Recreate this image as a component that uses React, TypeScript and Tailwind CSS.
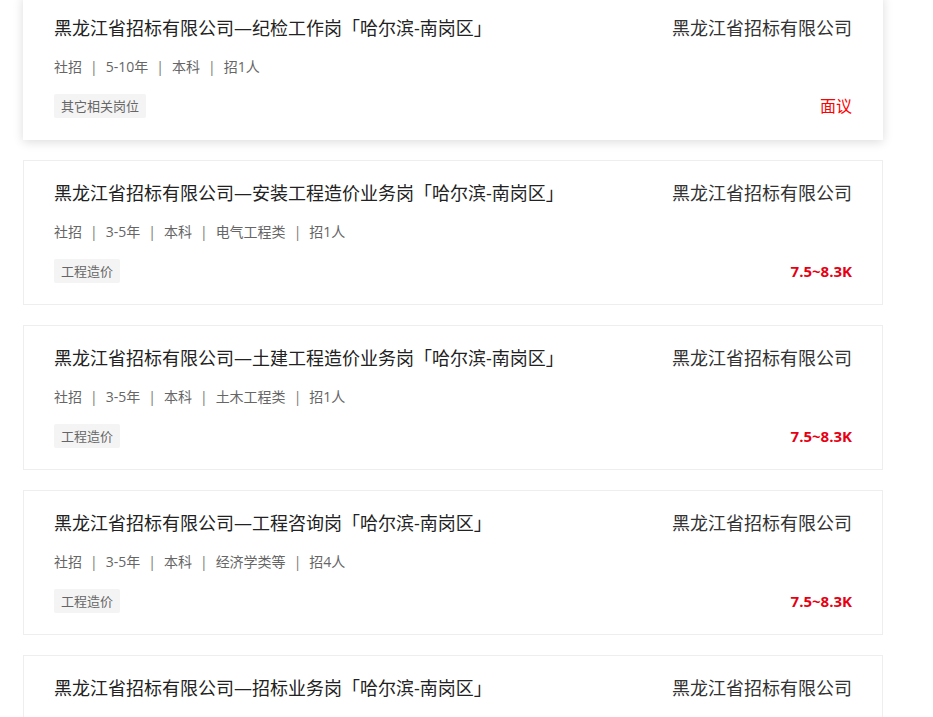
const jobs = [
  {
    title: "黑龙江省招标有限公司—纪检工作岗「哈尔滨-南岗区」",
    meta: ["社招", "5-10年", "本科", "招1人"],
    tag: "其它相关岗位",
    salary: "面议",
  },
  {
    title: "黑龙江省招标有限公司—安装工程造价业务岗「哈尔滨-南岗区」",
    meta: ["社招", "3-5年", "本科", "电气工程类", "招1人"],
    tag: "工程造价",
    salary: "7.5~8.3K",
  },
  {
    title: "黑龙江省招标有限公司—土建工程造价业务岗「哈尔滨-南岗区」",
    meta: ["社招", "3-5年", "本科", "土木工程类", "招1人"],
    tag: "工程造价",
    salary: "7.5~8.3K",
  },
  {
    title: "黑龙江省招标有限公司—工程咨询岗「哈尔滨-南岗区」",
    meta: ["社招", "3-5年", "本科", "经济学类等", "招4人"],
    tag: "工程造价",
    salary: "7.5~8.3K",
  },
  {
    title: "黑龙江省招标有限公司—招标业务岗「哈尔滨-南岗区」",
    meta: ["社招", "3-5年", "本科", "招1人"],
    tag: "招标代理",
    salary: "7.5~8.3K",
  },
];

function JobCard({ job, hovered }: { job: (typeof jobs)[number]; hovered: boolean }) {
  const negotiable = job.salary === "面议";
  return (
    <div
      className={`w-[860px] shrink-0 bg-white border border-[#eeeeee] px-[30px] pt-[19px] pb-[21px] ${
        hovered ? "shadow-[0_2px_10px_rgba(0,0,0,0.14)] border-transparent" : ""
      }`}
    >
      <div className="flex items-center justify-between h-[26px]">
        <div className="text-[18px] leading-[26px] text-[#222]">{job.title}</div>
        <div className="text-[18px] leading-[26px] text-[#333]">黑龙江省招标有限公司</div>
      </div>
      <div className="mt-4 flex items-center h-5 text-[14px] leading-5 text-[#666]">
        {job.meta.map((m, i) => (
          <span key={i} className="flex items-center">
            {i > 0 && <span className="mx-2 text-[#777]">|</span>}
            {m}
          </span>
        ))}
      </div>
      <div className="mt-[17px] flex items-center justify-between h-6">
        <span className="h-6 px-[7px] rounded-[2px] bg-[#f4f4f4] text-[13px] leading-6 text-[#666]">
          {job.tag}
        </span>
        {negotiable ? (
          <span className="text-[16px] text-[#ff0000]">{job.salary}</span>
        ) : (
          <span className="text-[15px] font-bold text-[#e60012]">{job.salary}</span>
        )}
      </div>
    </div>
  );
}

export default function App() {
  return (
    <div
      className="w-[933px] h-[717px] overflow-hidden bg-white"
      style={{ fontFamily: '"Open Sans", "Noto Sans CJK SC", sans-serif' }}
    >
      <div className="-mt-[5px] pl-[23px] flex flex-col gap-5">
        {jobs.map((job, i) => (
          <JobCard key={i} job={job} hovered={i === 0} />
        ))}
      </div>
    </div>
  );
}
